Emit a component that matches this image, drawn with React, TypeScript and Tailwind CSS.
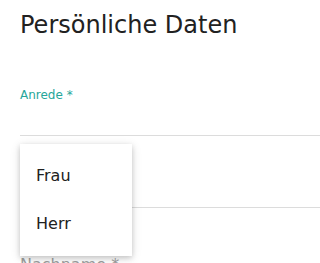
import React from 'react'

const options = ['Frau', 'Herr']

export default function App() {
  return (
    <div className="relative min-h-screen overflow-hidden bg-white pl-5 font-['DejaVu_Sans',sans-serif]">
      {/* Heading */}
      <h1 className="pt-[11px] text-[24px] leading-7 text-[#212121]">Persönliche Daten</h1>

      {/* Anrede select */}
      <div className="mt-[49px]">
        <label className="block text-[12px] leading-[15px] text-[#26a69a]">Anrede *</label>
        <div className="mt-[32px] h-px bg-[#dcdcdc]" />
      </div>

      {/* Vorname (hidden under the menu) */}
      <div className="mt-[71px] h-px bg-[#dcdcdc]" />

      {/* Nachname */}
      <div className="mt-[47px] text-[16px] leading-5 text-[#9e9e9e]">Nachname *</div>

      {/* Open dropdown */}
      <ul className="absolute left-5 top-[144px] w-[112px] bg-white py-2 shadow-[0_2px_5px_0_rgba(0,0,0,0.16),0_2px_10px_0_rgba(0,0,0,0.12)]">
        {options.map((o) => (
          <li key={o} className="flex h-12 items-center px-4 text-[16px] text-[#212121]">
            {o}
          </li>
        ))}
      </ul>
    </div>
  )
}
